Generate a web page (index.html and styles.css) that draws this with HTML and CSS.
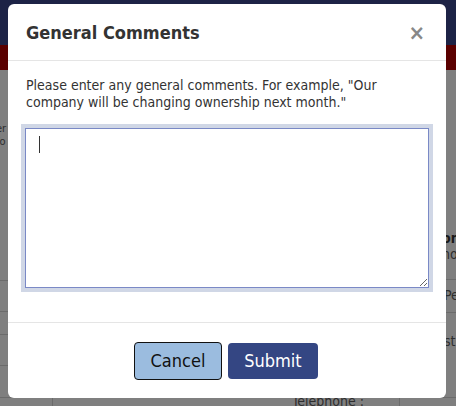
FILE: index.html
```html
<!DOCTYPE html>
<html>
<head>
<meta charset="utf-8">
<link rel="stylesheet" href="styles.css">
</head>
<body>
<div class="page">
  <div class="topbar"></div>
  <div class="redbar"></div>
  <div class="cols">
    <div class="left-col">
      <div class="frag">er</div>
      <div class="frag">fo</div>
      <div class="lrow h31"></div>
      <div class="lrow h23"></div>
      <div class="lrow h31"></div>
      <div class="lrow h22"></div>
    </div>
    <div class="right-col">
      <div class="frag bold">on</div>
      <div class="frag">no</div>
      <div class="rrow h33">Pe</div>
      <div class="rrow h51 bottom">st</div>
    </div>
  </div>
  <div class="bottom-row">
    <div class="cell c1"></div>
    <div class="cell c2"><span class="tel">Telephone :</span></div>
    <div class="cell c3"></div>
  </div>
</div>

<div class="backdrop">
  <div class="modal">
    <div class="modal-header">
      <h2 class="modal-title">General Comments</h2>
      <span class="close">&times;</span>
    </div>
    <div class="modal-body">
      <p class="hint">Please enter any general comments. For example, "Our company will be changing ownership next month."</p>
      <div class="field">
        <textarea class="comments"></textarea>
        <span class="caret"></span>
      </div>
    </div>
    <div class="modal-footer">
      <button class="btn btn-cancel">Cancel</button>
      <button class="btn btn-submit">Submit</button>
    </div>
  </div>
</div>
</body>
</html>
```
FILE: styles.css
```css
* { box-sizing: border-box; }
html, body { margin: 0; padding: 0; }
body {
  width: 456px;
  height: 406px;
  overflow: hidden;
  position: relative;
  font-family: "DejaVu Sans Condensed", "DejaVu Sans", sans-serif;
  font-stretch: condensed;
  background: #7f7f7f;
}

/* dimmed page behind the dialog */
.page { height: 406px; display: flex; flex-direction: column; color: #2e2e2e; font-size: 14px; }
.topbar { height: 45px; background: #1d2346; flex: none; }
.redbar { height: 25px; background: #5a0000; flex: none; }
.cols { height: 327px; flex: none; display: flex; justify-content: space-between; }
.left-col { width: 12px; padding-top: 52px; overflow: hidden; }
.left-col .frag { font-size: 11px; line-height: 13px; margin-left: -4px; }
.left-col .frag + .frag + .lrow { margin-top: 132px; }
.lrow { border-top: 1px solid #6b6b6b; }
.right-col { width: 12px; padding-top: 160px; overflow: hidden; }
.right-col .frag { line-height: 16px; margin-left: -2px; }
.right-col .frag + .frag + .rrow { margin-top: 17px; }
.rrow { border-top: 1px solid #6b6b6b; line-height: 30px; }
.rrow.bottom { line-height: 56px; }
.bold { font-weight: bold; color: #1a1a1a; }
.h22 { height: 22px; }
.h23 { height: 23px; }
.h31 { height: 31px; }
.h33 { height: 33px; }
.h51 { height: 51px; }
.bottom-row { flex: 1; display: flex; border-top: 1px solid #6b6b6b; }
.cell { height: 100%; }
.c1 { width: 53px; border-right: 1px solid #6b6b6b; }
.c2 { width: 347px; border-right: 1px solid #6b6b6b; padding-left: 239px; }
.tel { display: block; margin-top: -5px; color: #2e2e2e; white-space: nowrap; }

/* dialog */
.backdrop {
  position: absolute;
  inset: 0;
  padding: 4px 10px 0 8px;
}
.modal {
  width: 438px;
  height: 394px;
  background: #fff;
  border-radius: 6px;
  display: flex;
  flex-direction: column;
  color: #333;
}
.modal-header {
  height: 57px;
  border-bottom: 1px solid #e5e5e5;
  display: flex;
  align-items: center;
  justify-content: space-between;
  padding: 0 21px 0 18px;
}
.modal-title {
  margin: 0;
  font-size: 18px;
  font-weight: bold;
  color: #333;
}
.close {
  font-size: 22px;
  font-weight: bold;
  color: #888;
  line-height: 1;
  margin-top: 2px;
}
.modal-body {
  padding: 16px 13px 0 13px;
  height: 262px;
  border-bottom: 1px solid #e5e5e5;
}
.hint {
  margin: 0 4px 17px 5px;
  font-size: 14px;
  line-height: 17px;
  color: #333;
}
.field {
  position: relative;
  margin: 4px 0 0 4px;
  width: 404px;
}
.comments {
  display: block;
  width: 404px;
  height: 160px;
  border: 1px solid #7a89c6;
  outline: 4px solid #d0d7e6;
  resize: both;
  padding: 7px 14px;
  font-family: inherit;
  font-size: 14px;
  color: #333;
}
.caret {
  position: absolute;
  left: 14px;
  top: 8px;
  width: 1px;
  height: 17px;
  background: #333;
}
.modal-footer {
  flex: 1;
  display: flex;
  justify-content: center;
  align-items: center;
  gap: 6px;
  padding-right: 2px;
}
.btn {
  font-family: inherit;
  font-size: 18px;
  height: 38px;
  border-radius: 4px;
  padding: 0;
}
.btn-cancel {
  width: 88px;
  background: #9bbcdf;
  border: 1px solid #111;
  color: #111;
}
.btn-submit {
  width: 90px;
  height: 36px;
  background: #344683;
  border: none;
  color: #fff;
}
```
